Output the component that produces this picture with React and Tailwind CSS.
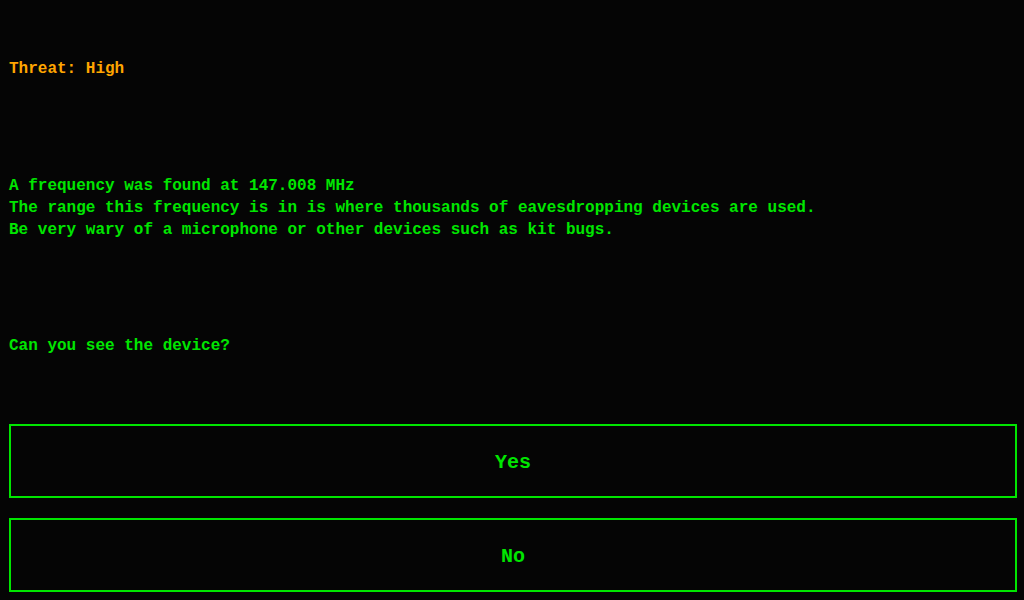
import React from 'react'

const mono = { fontFamily: '"Nimbus Mono PS", "Nimbus Mono L", Courier, "FreeMono", "Liberation Mono", monospace' }

function ChoiceButton({ label }) {
  return (
    <button
      className="w-[1008px] h-[74px] border-2 border-[#00e600] bg-transparent text-[#00e600] text-[20px] font-bold flex items-center justify-center pt-[3px]"
      style={mono}
    >
      {label}
    </button>
  )
}

export default function App() {
  return (
    <div className="w-[1024px] h-[600px] bg-[#050505] overflow-hidden pl-[9px] pt-[58px]" style={mono}>
      <p className="text-[16px] leading-[22px] font-bold text-[#ffa500]">Threat: High</p>

      <div className="mt-[95px] text-[16px] leading-[22px] font-bold text-[#00e600]">
        <p>A frequency was found at 147.008 MHz</p>
        <p>The range this frequency is in is where thousands of eavesdropping devices are used.</p>
        <p>Be very wary of a microphone or other devices such as kit bugs.</p>
      </div>

      <p className="mt-[94px] text-[16px] leading-[22px] font-bold text-[#00e600]">Can you see the device?</p>

      <div className="mt-[67px] flex flex-col gap-[20px]">
        <ChoiceButton label="Yes" />
        <ChoiceButton label="No" />
      </div>
    </div>
  )
}
